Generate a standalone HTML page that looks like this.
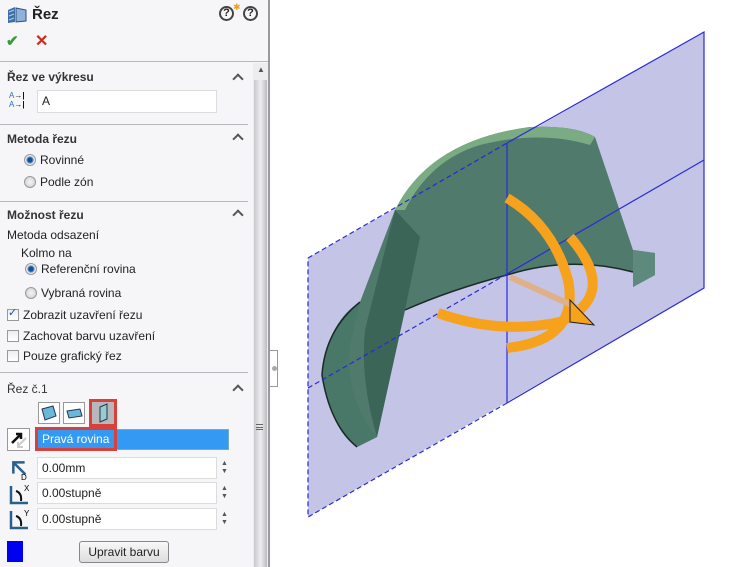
<!DOCTYPE html>
<html><head><meta charset="utf-8"><style>
*{margin:0;padding:0;box-sizing:border-box}
body{width:750px;height:567px;background:#fff;position:relative;overflow:hidden;font-family:"Liberation Sans",sans-serif;font-size:12px;color:#222}
.a{position:absolute;white-space:nowrap}
.b{font-weight:bold;color:#333}
.hr{position:absolute;left:0;width:248px;height:1px;background:#b8b8bc}
.car{position:absolute;left:234px;width:8px;height:8px;border-left:2px solid #555;border-top:2px solid #555;transform:rotate(45deg)}
.in{position:absolute;background:#fff;border:1px solid #dcdcdc;padding:3px 4px;font-size:12px}
.rad{position:absolute;width:12px;height:12px;border-radius:50%;border:1px solid #999;background:radial-gradient(#f4f4f4,#ccc)}
.rad.on{background:radial-gradient(#1d4f8e 30%,#6aa0d8 45%,#eee 60%)}
.chk{position:absolute;width:12px;height:12px;border:1px solid #999;background:linear-gradient(#eee,#fff)}
.sp{position:absolute;left:221px;font-size:7px;color:#555;line-height:8px}
</style></head><body>
<div class="a" style="left:0;top:0;width:268px;height:567px;background:#f6f6f8"></div>
<div class="a" style="left:253px;top:63px;width:15px;height:504px;background:#ededf0"></div>
<div class="a" style="left:254px;top:80px;width:13px;height:487px;background:linear-gradient(90deg,#c8c8cc,#eeeef0 50%,#bcbcc0)"></div>
<div class="a" style="left:257px;top:65px;font-size:8px;color:#555">▲</div>
<div class="a" style="left:256px;top:424px;width:7px;height:6px;border-top:1px solid #666;border-bottom:1px solid #666"></div>
<div class="a" style="left:256px;top:427px;width:7px;height:1px;background:#666"></div>
<div class="a" style="left:268px;top:0;width:2px;height:567px;background:#9a9a9e"></div>
<div class="a" style="left:270px;top:350px;width:8px;height:37px;border:1px solid #999;border-left:none;background:#fff"></div>
<div class="a" style="left:272px;top:366px;width:5px;height:5px;border-radius:50%;background:#aaa"></div>

<svg class="a" style="left:7px;top:6px" width="20" height="18"><path d="M1 4 L8 1 L8 16 L1 17Z" fill="#3f6fa8"/><path d="M9 2 L19 4 L19 15 L9 16Z" fill="#8fb2d8" stroke="#2b4f80"/><path d="M2 6 L7 4 M2 10 L7 8 M2 14 L7 12" stroke="#bcd" /></svg>
<div class="a b" style="left:32px;top:6px;font-size:15px;color:#222">Řez</div>
<div class="a" style="left:219px;top:6px;width:15px;height:15px;border:2px solid #444;border-radius:50%;font-size:11px;font-weight:bold;text-align:center;line-height:11px">?</div>
<div class="a" style="left:233px;top:2px;color:#f0a020;font-size:9px">✱</div>
<div class="a" style="left:243px;top:6px;width:15px;height:15px;border:2px solid #444;border-radius:50%;font-size:11px;font-weight:bold;text-align:center;line-height:11px">?</div>
<div class="a" style="left:6px;top:32px;color:#3a9a3a;font-size:15px;font-weight:bold">✔</div>
<div class="a" style="left:35px;top:31px;color:#d02a1a;font-size:16px;font-weight:bold">✕</div>
<div class="hr" style="top:61px;width:268px"></div>

<div class="a b" style="left:7px;top:70px">Řez ve výkresu</div>
<div class="car" style="top:75px"></div>
<div class="a" style="left:9px;top:91px;font-size:8px;line-height:9px;color:#2a6fc0">A<b style="color:#111">→|</b><br>A<b style="color:#111">→|</b></div>
<div class="in" style="left:37px;top:90px;width:180px;height:23px">A</div>
<div class="hr" style="top:124px"></div>

<div class="a b" style="left:7px;top:132px">Metoda řezu</div>
<div class="car" style="top:135px"></div>
<div class="rad on" style="left:24px;top:154px"></div><div class="a" style="left:40px;top:153px">Rovinné</div>
<div class="rad" style="left:24px;top:176px"></div><div class="a" style="left:40px;top:175px">Podle zón</div>
<div class="hr" style="top:201px"></div>

<div class="a b" style="left:7px;top:208px">Možnost řezu</div>
<div class="car" style="top:211px"></div>
<div class="a" style="left:7px;top:228px">Metoda odsazení</div>
<div class="a" style="left:21px;top:246px">Kolmo na</div>
<div class="rad on" style="left:25px;top:263px"></div><div class="a" style="left:41px;top:262px">Referenční rovina</div>
<div class="rad" style="left:25px;top:287px"></div><div class="a" style="left:41px;top:286px">Vybraná rovina</div>
<div class="chk" style="left:7px;top:309px"></div><div class="a" style="left:8px;top:306px;color:#1d4f9e;font-size:11px">✓</div><div class="a" style="left:23px;top:308px">Zobrazit uzavření řezu</div>
<div class="chk" style="left:7px;top:330px"></div><div class="a" style="left:23px;top:329px">Zachovat barvu uzavření</div>
<div class="chk" style="left:7px;top:350px"></div><div class="a" style="left:23px;top:349px">Pouze grafický řez</div>
<div class="hr" style="top:372px"></div>

<div class="a b" style="left:7px;top:382px;font-weight:normal">Řez č.1</div>
<div class="car" style="top:386px"></div>
<div class="a" style="left:38px;top:402px;width:22px;height:22px;border:1px solid #999;background:#fff"></div>
<div class="a" style="left:63px;top:402px;width:22px;height:22px;border:1px solid #999;background:#fff"></div>
<svg class="a" style="left:38px;top:402px" width="48" height="22"><path d="M4 7 L15 4 L18 14 L7 18Z" fill="#6ab8d8" stroke="#235" /><path d="M29 9 L42 7 L44 14 L31 16Z" fill="#6ab8d8" stroke="#235"/></svg>
<div class="a" style="left:89px;top:399px;width:28px;height:28px;border:3px solid #d8403a;background:#b8b8bc"></div>
<svg class="a" style="left:92px;top:402px" width="22" height="22"><path d="M8 5 L15 2 L15 17 L8 20Z" fill="#9cc" stroke="#235"/></svg>
<div class="a" style="left:7px;top:428px;width:23px;height:23px;border:1px solid #999;background:#fff"></div>
<svg class="a" style="left:8px;top:429px" width="22" height="22"><path d="M4 14 L13 5 M8 5 L13 5 L13 10" stroke="#111" stroke-width="2.5" fill="none"/><path d="M18 9 L10 17 M10 13 L10 18 L15 18" stroke="#ccc" stroke-width="2" fill="none"/></svg>
<div class="a" style="left:37px;top:429px;width:192px;height:21px;background:#3399f3;border:1px solid #7ab"></div>
<div class="a" style="left:35px;top:427px;width:82px;height:24px;border:3px solid #d8403a"></div>
<div class="a" style="left:42px;top:432px;color:#fff">Pravá rovina</div>

<svg class="a" style="left:8px;top:458px" width="24" height="24"><path d="M11 2 L3 10 L11 18 M3 10 L20 10" stroke="#2a5f8a" stroke-width="2.5" fill="none" transform="rotate(45 11 10)"/><text x="13" y="22" font-size="8" font-family="Liberation Sans">D</text></svg>
<div class="in" style="left:37px;top:457px;width:180px;height:22px">0.00mm</div>
<div class="sp" style="top:460px">▲<br>▼</div>
<svg class="a" style="left:8px;top:483px" width="24" height="24"><path d="M3 3 L3 20 L20 20" stroke="#2a5f8a" stroke-width="2.5" fill="none"/><path d="M8 8 Q14 10 13 18" stroke="#111" stroke-width="2" fill="none"/><text x="16" y="8" font-size="8" font-family="Liberation Sans">X</text></svg>
<div class="in" style="left:37px;top:482px;width:180px;height:22px">0.00stupně</div>
<div class="sp" style="top:485px">▲<br>▼</div>
<svg class="a" style="left:8px;top:508px" width="24" height="24"><path d="M3 3 L3 20 L20 20" stroke="#2a5f8a" stroke-width="2.5" fill="none"/><path d="M8 8 Q14 10 13 18" stroke="#111" stroke-width="2" fill="none"/><text x="16" y="8" font-size="8" font-family="Liberation Sans">Y</text></svg>
<div class="in" style="left:37px;top:508px;width:180px;height:22px">0.00stupně</div>
<div class="sp" style="top:511px">▲<br>▼</div>
<div class="a" style="left:7px;top:541px;width:16px;height:21px;background:#0000f0"></div>
<div class="a" style="left:79px;top:541px;width:90px;height:22px;border:1px solid #888;border-radius:3px;background:linear-gradient(#f8f8f8,#ddd);text-align:center;line-height:20px">Upravit barvu</div>

<svg class="a" style="left:0;top:0" width="750" height="567">
<polygon points="308,258 704,32 704,288 308,517" fill="#c4c4e6"/>
<path d="M395,210 Q430,140 530,127 Q575,125 595,137 L633,250 L655,253 L655,275 L633,287 L633,272 Q570,255 507,275 Q450,290 405,310 L377,437 L357,447 Q330,430 322,370 Q330,320 360,302 Z" fill="#4f7a6c"/>
<path d="M395,210 L420,237 L405,310 L377,437 Q360,380 365,330 Z" fill="#3a6557"/>
<path d="M360,302 Q325,330 322,375 Q330,425 357,447 L377,437 Q345,400 350,345 Z" fill="#4a7868"/>
<path d="M395,210 Q430,140 530,127 Q575,125 595,137 L590,145 Q540,130 480,145 Q430,160 405,210 Z" fill="#7aab82"/>
<path d="M633,250 L655,253 L655,275 L633,287Z" fill="#5e8a7e"/>
<path d="M633,272 Q570,255 507,275 Q450,290 405,310" stroke="#1a2a28" stroke-width="1.5" fill="none"/>
<path d="M360,302 Q325,330 322,375 Q330,425 357,447" stroke="#1a2a28" stroke-width="1.5" fill="none"/>
<path d="M308,258 L507,143" stroke="#2a2ad8" stroke-width="1.2" stroke-dasharray="5,3"/>
<path d="M507,143 L704,32 L704,288 L507,403" stroke="#2a2ad8" stroke-width="1.2" fill="none"/>
<path d="M507,403 L308,517 L308,258" stroke="#2a2ad8" stroke-width="1.2" stroke-dasharray="5,3" fill="none"/>
<path d="M308,388 L507,274" stroke="#2a2ad8" stroke-width="1.2" stroke-dasharray="5,3"/>
<path d="M507,274 L704,160" stroke="#2a2ad8" stroke-width="1.2"/>
<path d="M507,143 L507,403" stroke="#2a2ad8" stroke-width="1.2"/>
<path d="M507,198 Q553,225 568,280 Q580,340 507,348" stroke="#f6a21c" stroke-width="10" fill="none"/>
<path d="M438,313 Q500,335 560,322 Q620,295 570,237" stroke="#f6a21c" stroke-width="10" fill="none"/>
<path d="M510,277 L578,308" stroke="#e0b088" stroke-width="6"/>
<path d="M570,300 L594,325 L570,322 Z" fill="#f6a21c" stroke="#222"/>
</svg>
</body></html>
